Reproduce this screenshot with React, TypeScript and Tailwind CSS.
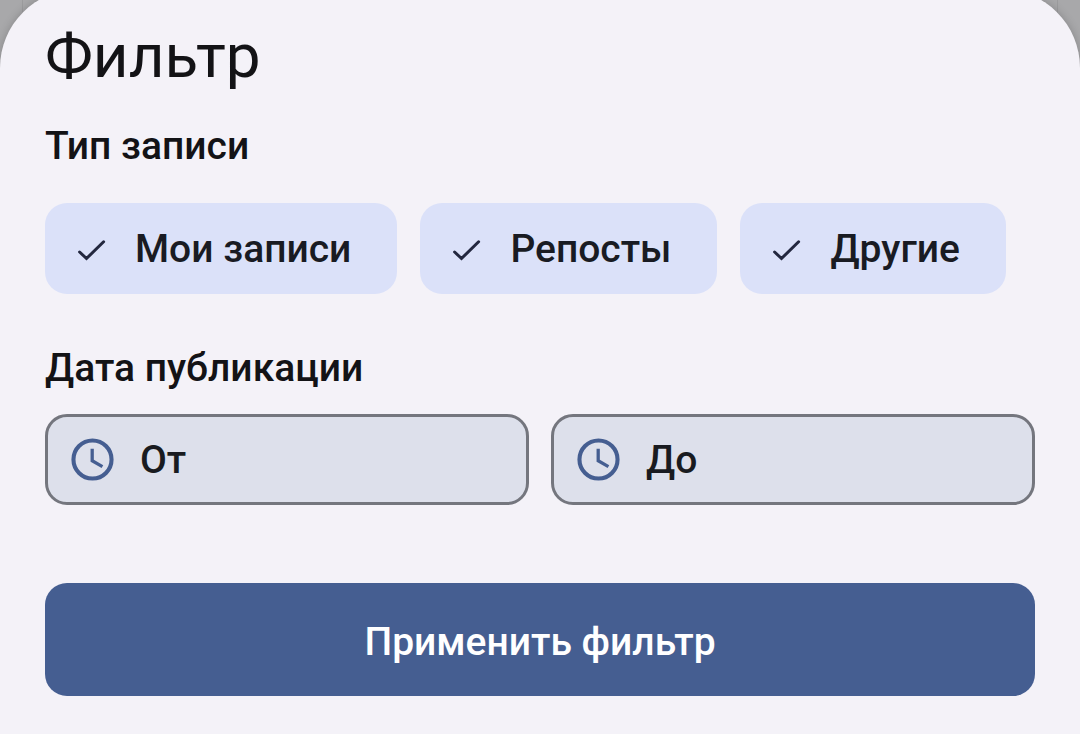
import { useState } from "react";

const recordTypes = [
  { id: "own", label: "Мои записи" },
  { id: "reposts", label: "Репосты" },
  { id: "other", label: "Другие" },
];

function CheckIcon({ visible }: { visible: boolean }) {
  return (
    <svg
      viewBox="0 0 36 36"
      className={visible ? "h-9 w-9 shrink-0" : "invisible h-9 w-9 shrink-0"}
      fill="none"
      stroke="#23273f"
      strokeWidth="3"
      strokeLinecap="round"
      aria-hidden="true"
    >
      <path d="M5.6 21 12.5 27.5 29.6 10.8" />
    </svg>
  );
}

function ClockIcon() {
  return (
    <svg viewBox="0 0 42 42" className="h-[43px] w-[43px] shrink-0" fill="none" stroke="#455e91" aria-hidden="true">
      <circle cx="21" cy="21" r="18.6" strokeWidth="4" />
      <path d="M20.7 10.6v11.6l10 5.8" strokeWidth="3.2" />
    </svg>
  );
}

function TypeChip({ id, label }: { id: string; label: string }) {
  const [checked, setChecked] = useState(true);

  return (
    <label
      htmlFor={id}
      className="relative flex h-[91px] cursor-pointer items-center gap-[25px] rounded-[22px] bg-[#dbe1f9] pl-[29px] pr-[46px] text-[#191b23]"
    >
      <input
        id={id}
        type="checkbox"
        checked={checked}
        onChange={(e) => setChecked(e.target.checked)}
        className="sr-only"
      />
      <CheckIcon visible={checked} />
      {label}
    </label>
  );
}

function DateField({ label }: { label: string }) {
  return (
    <button
      type="button"
      className="flex h-[91px] flex-1 items-center gap-[26px] rounded-[22px] border-3 border-[#74767e] bg-[#dde0eb] px-[23px] text-[#191b20]"
    >
      <ClockIcon />
      {label}
    </button>
  );
}

export default function App() {
  return (
    <div className="relative min-h-screen overflow-hidden bg-[#a8a8aa] font-['Roboto',sans-serif] text-[39px] leading-[56px] font-medium text-[#131316]">
      {/* dimmed page behind the sheet */}
      <div className="absolute inset-x-[22px] top-0 h-16 border-x border-[#9c9c9e]" />

      <form
        className="relative -mt-[11px] min-h-[calc(100vh+11px)] rounded-t-[79px] bg-[#f4f2f8] px-[45px] pt-[27px] pb-[38px] shadow-[0_0_10px_rgba(0,0,0,0.2)]"
        onSubmit={(e) => e.preventDefault()}
      >
        <h1 className="text-[62px] leading-[80px] font-normal">Фильтр</h1>

        <fieldset className="mt-[22px]">
          <legend>Тип записи</legend>
          <div className="mt-[29px] flex flex-wrap gap-[23px]">
            {recordTypes.map((t) => (
              <TypeChip key={t.id} id={t.id} label={t.label} />
            ))}
          </div>
        </fieldset>

        <section className="mt-[46px]">
          <h2>Дата публикации</h2>
          <div className="mt-[18px] flex gap-[22px]">
            <DateField label="От" />
            <DateField label="До" />
          </div>
        </section>

        <button
          type="submit"
          className="mt-[78px] flex h-[113px] w-full items-center justify-center rounded-[22px] bg-[#455e91] pt-1 text-white"
        >
          Применить фильтр
        </button>
      </form>
    </div>
  );
}
